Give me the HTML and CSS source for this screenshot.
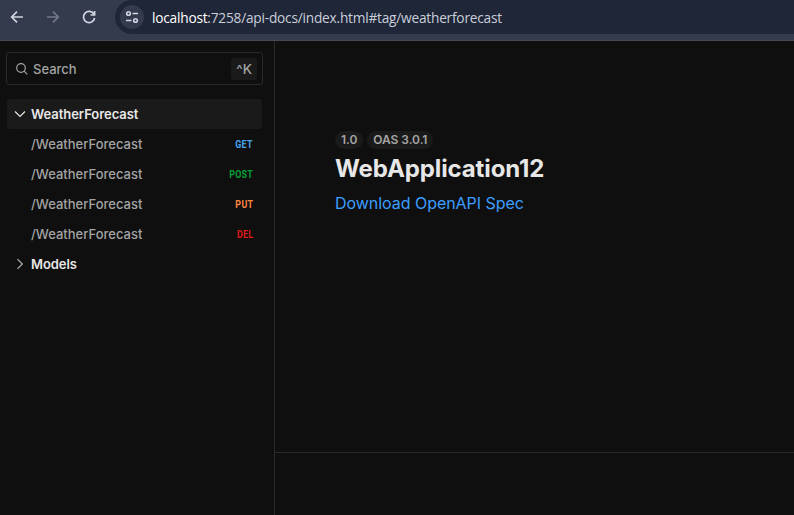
FILE: index.html
```
<!DOCTYPE html>
<html lang="en">
<head>
<meta charset="utf-8">
<title>WebApplication12</title>
<link rel="stylesheet" href="styles.css">
</head>
<body>
<header class="toolbar">
  <svg class="nav" viewBox="0 0 16 16"><path d="M14 8H3M8 2.7 2.7 8 8 13.3"/></svg>
  <svg class="nav off" viewBox="0 0 16 16"><path d="M2 8h11M8 2.7 13.3 8 8 13.3"/></svg>
  <svg class="nav" viewBox="0 0 16 16"><path d="M13 5.3A5.6 5.6 0 1 0 13.6 9M13.6 2v4H9.6"/></svg>
  <div class="address">
    <span class="site"><svg viewBox="0 0 16 16"><circle cx="4.5" cy="4.5" r="1.8"/><path d="M8.5 4.5H14M2 11.5h5.5"/><circle cx="11.5" cy="11.5" r="1.8"/></svg></span>
    <span class="url">localhost<span>:7258/api-docs/index.html#tag/weatherforecast</span></span>
  </div>
</header>
<div class="app">
  <aside class="sidebar">
    <div class="search">
      <svg viewBox="0 0 14 14"><circle cx="6" cy="6" r="4.3"/><path d="m9.1 9.1 3.2 3.2"/></svg>
      <span>Search</span><kbd><span>^</span>K</kbd>
    </div>
    <nav>
      <div class="row group active"><svg viewBox="0 0 12 12"><path d="m1 3.5 5 5 5-5"/></svg>WeatherForecast</div>
      <div class="row"><span>/WeatherForecast</span><b class="get">GET</b></div>
      <div class="row"><span>/WeatherForecast</span><b class="post">POST</b></div>
      <div class="row"><span>/WeatherForecast</span><b class="put">PUT</b></div>
      <div class="row"><span>/WeatherForecast</span><b class="del">DEL</b></div>
      <div class="row group"><svg class="closed" viewBox="0 0 12 12"><path d="m3.5 1.2 4.8 4.8-4.8 4.8"/></svg>Models</div>
    </nav>
  </aside>
  <main>
    <section class="intro">
      <div class="badges"><span>1.0</span><span>OAS 3.0.1</span></div>
      <h1>WebApplication12</h1>
      <a>Download OpenAPI Spec</a>
    </section>
  </main>
</div>
</body>
</html>
```
FILE: styles.css
```
* { box-sizing: border-box; }
body { margin: 0; height: 515px; display: flex; flex-direction: column; overflow: hidden; background: #0f0f0f; color: #e7e7e7; font-family: Inter, sans-serif; }
svg { fill: none; stroke: currentColor; flex: none; }
.toolbar { height: 41px; flex: none; display: flex; align-items: flex-start; background: #343b4c; border-bottom: 1px solid #454950; color: #d0d5e0; padding-left: 9px; }
.nav { width: 16px; height: 16px; margin: 9px 20px 0 0; stroke-width: 1.7; }
.off { color: #737985; }
.address { flex: 1; height: 34px; margin-left: -2px; border-radius: 17px 0 0 17px; background: #1f2637; display: flex; align-items: center; padding-left: 5px; }
.site { width: 24px; height: 24px; border-radius: 50%; background: #343b4c; display: flex; align-items: center; justify-content: center; margin-right: 8px; }
.site svg { width: 16px; height: 16px; stroke-width: 1.6; }
.url { font: 13.7px "Open Sans", sans-serif; letter-spacing: -0.22px; color: #fff; }
.url span { color: #c9cedb; }
.app { flex: 1; display: flex; }
.sidebar { width: 275px; border-right: 1px solid #2a2a2a; padding: 11px 11px 0 6px; }
.search { height: 33px; border: 1px solid #2a2a2a; border-radius: 3px; display: flex; align-items: center; padding: 0 5px 0 8px; font-size: 13px; font-weight: 500; color: #a4a4a4; }
.search svg { width: 14px; height: 14px; margin-right: 4px; stroke-width: 1.2; }
kbd { margin-left: auto; background: #1a1a1a; border-radius: 3px; height: 22px; padding: 0 5px; font: 500 13.5px/23px Inter, sans-serif; }
nav { margin-top: 14px; padding: 0 1px; }
.row { height: 30px; border-radius: 3px; display: flex; align-items: center; padding: 0 9px 0 24px; font-size: 13px; font-weight: 500; color: #a4a4a4; }
.group { color: #e7e7e7; font-weight: 600; padding-left: 7px; letter-spacing: -0.05px; }
.group svg { width: 12px; height: 12px; margin-right: 5px; stroke-width: 1.2; }
.group .closed { color: #b0b0b0; }
.active { background: #1a1a1a; }
.row b { margin-left: auto; font: 700 11.5px/12px Roboto, sans-serif; letter-spacing: 0.4px; transform: scaleX(0.77); transform-origin: right; }
.get { color: #48a5f0; }
.post { color: #069f38; }
.put { color: #ff8540; }
.del { color: #dc1b19; }
main { flex: 1; }
.intro { height: 412px; border-bottom: 1px solid #2a2a2a; padding: 90px 60px 0; }
.badges { display: flex; gap: 4px; }
.badges span { height: 18px; border-radius: 9px; padding: 0 6px; background: #1a1a1a; color: #a4a4a4; font-size: 12px; font-weight: 600; line-height: 18px; letter-spacing: -0.05px; }
h1 { margin: 4px 0 0; font-size: 24px; line-height: 32px; font-weight: 700; letter-spacing: -0.12px; }
.intro a { display: block; margin-top: 6px; font-size: 16px; line-height: 24px; letter-spacing: -0.04px; color: #3b9eff; }
```
